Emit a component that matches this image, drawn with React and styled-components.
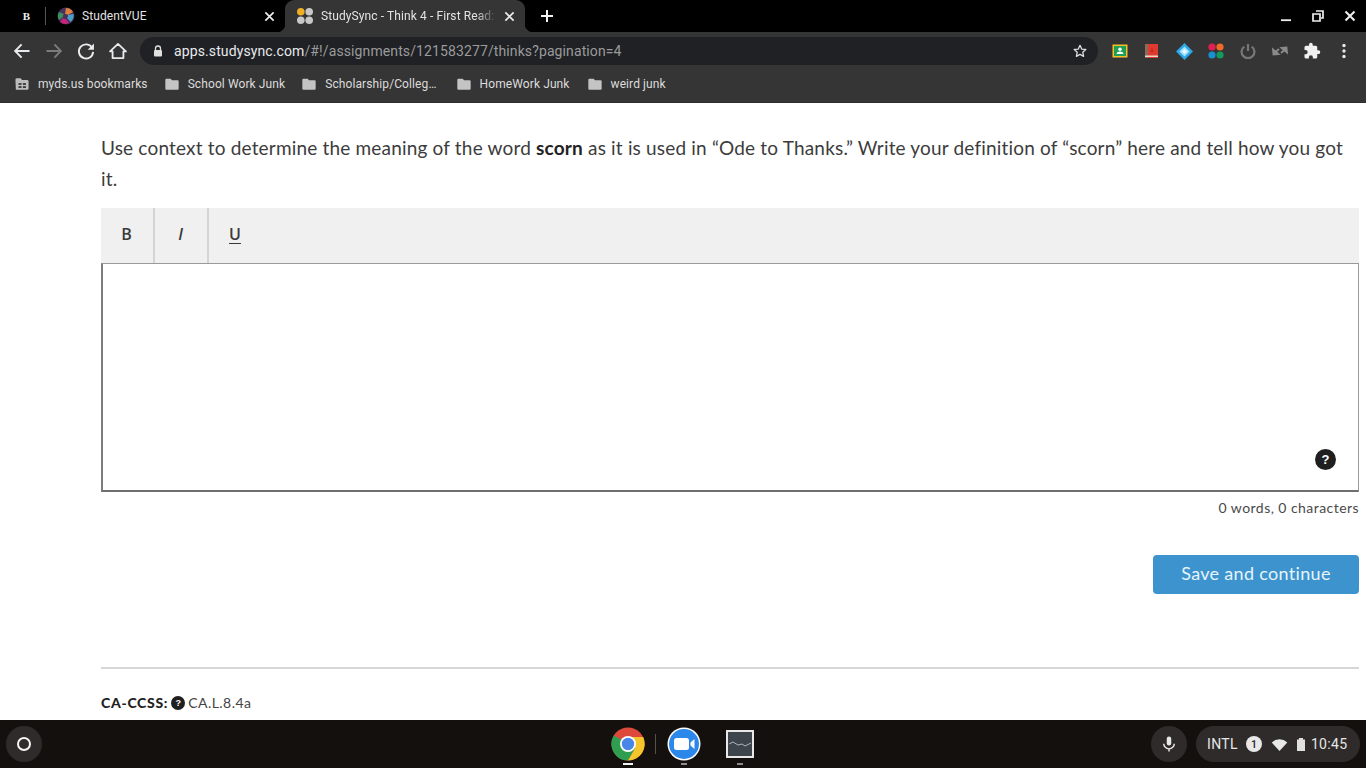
import React from "react";
import styled, { createGlobalStyle } from "styled-components";

const Global = createGlobalStyle`
  html, body { margin: 0; padding: 0; height: 100%; overflow: hidden; background: #fff; }
  #root { height: 100%; }
  *, *::before, *::after { box-sizing: border-box; }
`;

const Screen = styled.div`
  width: 1366px; height: 768px; display: flex; flex-direction: column; overflow: hidden;
  font-family: Roboto, "Liberation Sans", sans-serif;
`;

const TabStrip = styled.div`
  height: 32px; flex: none; background: #000; display: flex; align-items: stretch; color: #e8eaed;
`;
const PinnedTab = styled.div`
  width: 46px; display: flex; align-items: center; justify-content: center; position: relative;
  font: 700 11px "Liberation Serif", serif; color: #eee; padding-left: 7px;
  &::after { content: ""; position: absolute; right: 0; top: 7px; height: 18px; width: 1px; background: #555; }
`;
const Tab = styled.div`
  width: ${(p) => p.$w}px; display: flex; align-items: center;
  padding: 0 ${(p) => p.$pr}px 0 ${(p) => p.$pl}px; gap: 7px; font-size: 12px; position: relative;
  background: ${(p) => (p.$active ? "#353535" : "transparent")};
  border-radius: ${(p) => (p.$active ? "9px 9px 0 0" : "0")};
  ${(p) => p.$active && `
    &::before, &::after { content: ""; position: absolute; bottom: 0; width: 8px; height: 8px; }
    &::before { left: -8px; background: radial-gradient(circle at 0 0, transparent 8px, #353535 8.5px); }
    &::after { right: -8px; background: radial-gradient(circle at 100% 0, transparent 8px, #353535 8.5px); }
  `}
`;
const TabTitle = styled.span`
  flex: 1; white-space: nowrap; overflow: hidden; color: #e3e3e3; letter-spacing: 0.1px;
  ${(p) => p.$fade && "-webkit-mask-image: linear-gradient(90deg,#000 88%,transparent 100%); mask-image: linear-gradient(90deg,#000 88%,transparent 100%);"}
`;
const NewTab = styled.div`
  width: 44px; display: flex; align-items: center; justify-content: center;
`;
const WindowControls = styled.div`
  margin-left: auto; display: flex; align-items: center; height: 100%;
`;
const WinBtn = styled.div`
  width: 32px; height: 32px; display: flex; align-items: center; justify-content: center;
`;

const Toolbar = styled.div`
  height: 38px; flex: none; background: #353535; display: flex; align-items: center;
  padding: 0 6px;
`;
const NavBtn = styled.div`
  width: 32px; height: 32px; display: flex; align-items: center; justify-content: center; flex: none;
`;
const Omnibox = styled.div`
  flex: none; width: 958px; height: 28px; margin-left: 6px; border-radius: 14px; background: #202124;
  display: flex; align-items: center; padding: 0 10px 0 12px; font-size: 14px;
`;
const Url = styled.span`
  margin-left: 10px; flex: 1; color: #9a9b9c; white-space: nowrap; letter-spacing: 0.11px;
  b { font-weight: 400; color: #e8eaed; }
`;
const Extensions = styled.div`
  display: flex; align-items: center; margin-left: 6px;
`;
const ExtBtn = styled.div`
  width: 32px; height: 32px; display: flex; align-items: center; justify-content: center;
`;

const Bookmarks = styled.div`
  height: 33px; flex: none; background: #353535; display: flex; align-items: center; padding: 0 0 4px 15px;
  border-bottom: 1px solid #2e2e2e; font-size: 12px; color: #dcdcdc; letter-spacing: 0.1px;
`;
const Bookmark = styled.div`
  display: flex; align-items: center; gap: ${(p) => p.$gap || 8}px; margin-right: ${(p) => p.$mr}px; white-space: nowrap;
`;

const Page = styled.main`
  flex: 1; min-height: 0; overflow: hidden; background: #fff; padding: 29px 7px 0 101px;
  color: #3a3a3a;
`;
const Prompt = styled.p`
  margin: 0; font-family: Lato, sans-serif; font-size: 19px; line-height: 31px; color: #3c3c3c; letter-spacing: 0.18px;
  b { color: #222; font-weight: 700; }
`;
const EditorBar = styled.div`
  margin-top: 14px; height: 55px; background: #f0f0f0; display: flex;
`;
const FormatBtn = styled.div`
  width: ${(p) => p.$w}px; display: flex; align-items: center; justify-content: center; padding: 0 1px 3px 0;
  border-right: ${(p) => (p.$plain ? "none" : "2px solid #d4d4d4")};
  font: ${(p) => (p.$italic ? "italic 600" : "600")} 16px "Open Sans", sans-serif; color: #3a3a3a;
  text-decoration: ${(p) => (p.$under ? "underline" : "none")}; text-underline-offset: 3px;
`;
const EditorBox = styled.div`
  height: 229px; border-style: solid; border-width: 1px 1px 2px 2px; border-color: #9a9a9a #9a9a9a #6f6f6f #7d7d7d;
  position: relative; background: #fff;
`;
const HelpBadge = styled.span`
  position: absolute; right: 22px; bottom: 20px; width: 21px; height: 21px; border-radius: 50%;
  background: #1f1f1f; color: #fff; display: flex; align-items: center; justify-content: center;
  font: 700 13px "Liberation Sans", sans-serif;
`;
const Count = styled.div`
  text-align: right; margin-top: 7px; font: 400 14px/18px Lato, sans-serif; letter-spacing: 0.45px; color: #4a4a4a;
`;
const Actions = styled.div`
  display: flex; justify-content: flex-end; margin-top: 38px;
`;
const SaveButton = styled.button`
  width: 206px; height: 39px; border: 0; border-radius: 4px; background: #3c93cd; color: #e6f4fb;
  font: 400 18px Lato, sans-serif; letter-spacing: 0.32px; padding: 0 0 3px;
`;
const Rule = styled.hr`
  margin: 73px 0 0; border: 0; border-top: 2px solid #d6d6d6;
`;
const Standards = styled.div`
  margin-top: 25px; display: flex; align-items: center; gap: 3px; font: 400 14px/18px Lato, sans-serif; color: #444; letter-spacing: 0.45px;
  b { font-weight: 900; color: #222; margin-right: 0; letter-spacing: 0.7px; }
`;
const SmallHelp = styled.span`
  width: 14px; height: 14px; border-radius: 50%; background: #1f1f1f; color: #fff; display: inline-flex; letter-spacing: 0;
  align-items: center; justify-content: center; font: 700 9px "Liberation Sans", sans-serif;
`;

const Shelf = styled.footer`
  height: 48px; flex: none; background: #14100e; display: flex; align-items: center; position: relative; padding: 0 6px;
`;
const Launcher = styled.div`
  width: 36px; height: 36px; border-radius: 50%; background: #2e2b2a; display: flex; align-items: center; justify-content: center;
  &::after { content: ""; width: 14px; height: 14px; border-radius: 50%; border: 2px solid #f4f4f4; }
`;
const ShelfApps = styled.div`
  position: absolute; left: 611px; top: 0; height: 48px; display: flex; align-items: center;
`;
const AppSlot = styled.div`
  width: ${(p) => p.$w}px; height: 48px; position: relative; display: flex; align-items: center; justify-content: center;
  &::after { content: ""; position: absolute; bottom: 3px; left: 50%; transform: translateX(-50%);
    width: ${(p) => (p.$on ? 10 : 6)}px; height: 2px; background: ${(p) => (p.$on ? "#f2f2f2" : "#8c8c8c")}; }
`;
const Divider = styled.span`
  width: 1px; height: 20px; background: #55514f; margin: 0 11px 0 10px;
`;
const Tray = styled.div`
  margin-left: auto; display: flex; align-items: center; gap: 9px;
`;
const MicPill = styled.div`
  width: 36px; height: 36px; border-radius: 50%; background: #2e2b2a; display: flex; align-items: center; justify-content: center;
`;
const StatusPill = styled.div`
  height: 36px; width: 164px; border-radius: 18px; background: #2e2b2a; display: flex; align-items: center; padding-left: 11px;
  font-size: 14px; color: #e6e6e6; letter-spacing: 0.35px;
`;
const Notif = styled.span`
  width: 16px; height: 16px; border-radius: 50%; background: #e8e8e8; color: #222; font-size: 10.5px; font-weight: 500;
  display: inline-flex; align-items: center; justify-content: center; margin: 0 9px 0 8px; letter-spacing: 0;
`;
const TrayIcon = styled.span`
  display: inline-flex; margin-right: ${(p) => p.$mr}px;
`;

const Icon = ({ s = 16, vb = 24, children, ...r }) => (
  <svg width={s} height={s} viewBox={`0 0 ${vb} ${vb}`} fill="none" {...r}>{children}</svg>
);
const CloseI = ({ c = "#e8eaed", s = 12, w = 2.4 }) => (
  <Icon s={s} vb={12}><path d="M1.5 1.5l9 9M10.5 1.5l-9 9" stroke={c} strokeWidth={w * 0.8} /></Icon>
);
const Folder = () => (
  <Icon s={16}><path d="M2 5.5a1.5 1.5 0 011.5-1.5H10l2 2.5h8.5A1.5 1.5 0 0122 8v11a1.5 1.5 0 01-1.5 1.5h-17A1.5 1.5 0 012 19z" fill="#c4c4c4" /></Icon>
);

export default function App() {
  return (
    <Screen>
      <Global />
      <TabStrip>
        <PinnedTab>B</PinnedTab>
        <Tab $w={239} $pl={11} $pr={10}>
          <Icon s={18} vb={18}>
            <circle cx="9" cy="9" r="8.5" fill="#45305f" />
            <path d="M9 1a8 8 0 017 4L11 8a3 3 0 00-3-1z" fill="#e0803a" />
            <path d="M16.5 7a8 8 0 01-3 8L10 11a3 3 0 001-3z" fill="#4a9fc4" />
            <path d="M12 16a8 8 0 01-9-1l3-4a3 3 0 003 1z" fill="#c2257a" />
            <path d="M2 13a8 8 0 010-8l5 2a3 3 0 00-1 3z" fill="#3c8f5b" />
          </Icon>
          <TabTitle>StudentVUE</TabTitle>
          <CloseI s={11} />
        </Tab>
        <Tab $active $w={240} $pl={11} $pr={10}>
          <Icon s={18} vb={18}>
            <circle cx="4.8" cy="4.8" r="3.8" fill="#eeb022" />
            <circle cx="13.2" cy="4.8" r="3.8" fill="#c8c8c8" />
            <circle cx="4.8" cy="13.2" r="3.8" fill="#c8c8c8" />
            <circle cx="13.2" cy="13.2" r="3.8" fill="#c8c8c8" />
          </Icon>
          <TabTitle $fade>StudySync - Think 4 - First Read:</TabTitle>
          <CloseI s={11} />
        </Tab>
        <NewTab>
          <Icon s={14} vb={14}><path d="M7 1v12M1 7h12" stroke="#f1f1f1" strokeWidth="2" /></Icon>
        </NewTab>
        <WindowControls>
          <WinBtn><Icon s={12} vb={12}><path d="M1 10.2h10" stroke="#eee" strokeWidth="1.8" /></Icon></WinBtn>
          <WinBtn><Icon s={12} vb={12}><path d="M4 1h7v7H9M1 4h7v7H1z" stroke="#eee" strokeWidth="1.7" /></Icon></WinBtn>
          <WinBtn><CloseI s={12} c="#eee" w={2.6} /></WinBtn>
        </WindowControls>
      </TabStrip>

      <Toolbar>
        <NavBtn><Icon s={20}><path d="M21 12H4M11.5 4L3.8 12l7.7 8" stroke="#e8eaed" strokeWidth="2.3" /></Icon></NavBtn>
        <NavBtn><Icon s={20}><path d="M3 12h17M12.5 4l7.7 8-7.7 8" stroke="#7b7b7b" strokeWidth="2.3" /></Icon></NavBtn>
        <NavBtn><Icon s={20}><path d="M19.5 8.5A8.5 8.5 0 1020.5 13" stroke="#e8eaed" strokeWidth="2.3" /><path d="M21.5 3v7.5H14z" fill="#e8eaed" /></Icon></NavBtn>
        <NavBtn><Icon s={20}><path d="M12 3.5L2.5 12.5H5.5V20.5H18.5V12.5H21.5z" stroke="#e8eaed" strokeWidth="2.2" strokeLinejoin="round" /></Icon></NavBtn>
        <Omnibox>
          <Icon s={12} vb={12}><path d="M3.5 5V3.5a2.5 2.5 0 015 0V5" stroke="#e0e0e0" strokeWidth="1.3" /><rect x="2" y="5" width="8" height="6.5" rx="1" fill="#e0e0e0" /></Icon>
          <Url><b>apps.studysync.com</b>/#!/assignments/121583277/thinks?pagination=4</Url>
          <Icon s={16}><path d="M12 3.5l2.6 5.6 6.1.7-4.5 4.2 1.2 6-5.4-3-5.4 3 1.2-6-4.5-4.2 6.1-.7z" stroke="#dcdcdc" strokeWidth="2" strokeLinejoin="round" /></Icon>
        </Omnibox>
        <Extensions>
          <ExtBtn>
            <Icon s={16} vb={16}>
              <rect x="0.5" y="1.5" width="15" height="13" fill="#f6c026" />
              <rect x="2" y="3" width="12" height="10" fill="#1f9d55" />
              <circle cx="8" cy="6.3" r="1.7" fill="#fff" />
              <path d="M4.5 11c.4-2 2-2.6 3.5-2.6s3.1.6 3.5 2.6z" fill="#fff" />
            </Icon>
          </ExtBtn>
          <ExtBtn>
            <Icon s={16} vb={16}>
              <rect x="2" y="1" width="12" height="14" fill="#de3a2f" />
              <rect x="1" y="1" width="3" height="14" fill="#8a6a5a" />
              <rect x="1" y="12.5" width="13" height="1.5" fill="#e9d8c8" />
              <path d="M8 4l2 5H6z" fill="#c92a22" />
            </Icon>
          </ExtBtn>
          <ExtBtn>
            <Icon s={17} vb={16}>
              <path d="M8 0l8 8-8 8-8-8z" fill="#29a9e8" />
              <path d="M8 3.2L12.8 8 8 12.8 3.2 8z" fill="#a7e2f8" />
              <path d="M8 5.6L10.4 8 8 10.4 5.6 8z" fill="#e9f9ff" />
            </Icon>
          </ExtBtn>
          <ExtBtn>
            <Icon s={16} vb={16}>
              <circle cx="4" cy="4" r="3.6" fill="#e31e53" />
              <circle cx="12" cy="4" r="3.6" fill="#ef6a27" />
              <circle cx="4" cy="12" r="3.6" fill="#1a8fd1" />
              <circle cx="12" cy="12" r="3.6" fill="#129a5f" />
            </Icon>
          </ExtBtn>
          <ExtBtn>
            <Icon s={16} vb={16}>
              <path d="M4.3 3.6a6.4 6.4 0 107.4 0" stroke="#777" strokeWidth="2.2" />
              <path d="M8 1v7" stroke="#777" strokeWidth="2.2" />
            </Icon>
          </ExtBtn>
          <ExtBtn>
            <Icon s={16} vb={16}>
              <path d="M7 6L2.5 10M1 6.5l.5 5 5-.5zM9 10l4.5-4M15 9.5l-.5-5-5 .5z" stroke="#8a8a8a" strokeWidth="1.8" fill="#8a8a8a" />
            </Icon>
          </ExtBtn>
          <ExtBtn>
            <Icon s={18}><path d="M20.5 11H19V7a2 2 0 00-2-2h-4V3.5a2.5 2.5 0 00-5 0V5H4a2 2 0 00-2 2v3.8h1.5a2.7 2.7 0 010 5.4H2V20a2 2 0 002 2h3.8v-1.5a2.7 2.7 0 015.4 0V22H17a2 2 0 002-2v-4h1.5a2.5 2.5 0 000-5z" fill="#f1f1f1" /></Icon>
          </ExtBtn>
          <ExtBtn>
            <Icon s={16} vb={16}>
              <circle cx="8" cy="2.5" r="1.7" fill="#e8e8e8" />
              <circle cx="8" cy="8" r="1.7" fill="#e8e8e8" />
              <circle cx="8" cy="13.5" r="1.7" fill="#e8e8e8" />
            </Icon>
          </ExtBtn>
        </Extensions>
      </Toolbar>

      <Bookmarks>
        <Bookmark $mr={16} $gap={9}>
          <Icon s={14} vb={16}>
            <path d="M1 3.5A1.5 1.5 0 012.5 2H7l1.5 2h6A1.5 1.5 0 0116 5.5v8a1.5 1.5 0 01-1.5 1.5h-13z" fill="#bdbdbd" transform="translate(-0.5 -0.5)" />
            <rect x="4" y="7" width="3.5" height="2" fill="#353535" /><rect x="4" y="10.5" width="3.5" height="2" fill="#353535" /><rect x="9" y="7" width="3.5" height="2" fill="#353535" /><rect x="9" y="10.5" width="3.5" height="2" fill="#353535" />
          </Icon>
          myds.us bookmarks
        </Bookmark>
        <Bookmark $mr={16}><Folder />School Work Junk</Bookmark>
        <Bookmark $mr={19}><Folder />Scholarship/Colleg…</Bookmark>
        <Bookmark $mr={17}><Folder />HomeWork Junk</Bookmark>
        <Bookmark $mr={0}><Folder />weird junk</Bookmark>
      </Bookmarks>

      <Page>
        <Prompt>
          Use context to determine the meaning of the word <b>scorn</b> as it is used in “Ode to Thanks.” Write your definition of “scorn” here and tell how you got it.
        </Prompt>
        <EditorBar>
          <FormatBtn $w={54}>B</FormatBtn>
          <FormatBtn $w={54} $italic>I</FormatBtn>
          <FormatBtn $w={53} $under $plain>U</FormatBtn>
        </EditorBar>
        <EditorBox><HelpBadge>?</HelpBadge></EditorBox>
        <Count>0 words, 0 characters</Count>
        <Actions><SaveButton>Save and continue</SaveButton></Actions>
        <Rule />
        <Standards><b>CA-CCSS:</b><SmallHelp>?</SmallHelp>CA.L.8.4a</Standards>
      </Page>

      <Shelf>
        <Launcher />
        <ShelfApps>
          <AppSlot $w={34} $on>
            <Icon s={34} vb={34}>
              <circle cx="17" cy="17" r="16.5" fill="#dd4a3c" />
              <path d="M2.8 8.5A16.5 16.5 0 0017 33.5l8-13z" fill="#2f9e50" />
              <path d="M17 10h15.2A16.5 16.5 0 0117 33.5l7-12z" fill="#f6c52b" />
              <circle cx="17" cy="17" r="8" fill="#fff" />
              <circle cx="17" cy="17" r="6.2" fill="#4a86e8" />
            </Icon>
          </AppSlot>
          <Divider />
          <AppSlot $w={34}>
            <Icon s={34} vb={34}>
              <circle cx="17" cy="17" r="16.5" fill="#fff" />
              <circle cx="17" cy="17" r="15" fill="#2b87ea" />
              <rect x="7" y="11" width="15" height="12" rx="2.5" fill="#fff" />
              <path d="M23.5 15.5L27.5 12v10l-4-3.5z" fill="#fff" />
            </Icon>
          </AppSlot>
          <AppSlot $w={78}>
            <Icon s={28} vb={28}>
              <rect x="1" y="1" width="26" height="26" fill="#3e444c" stroke="#e8e8e8" strokeWidth="2" />
              <path d="M3 14l4-2 5 3 4-1 3 2 6-3" stroke="#a8b4c0" strokeWidth="1" />
            </Icon>
          </AppSlot>
        </ShelfApps>
        <Tray>
          <MicPill>
            <Icon s={18}><rect x="9" y="2" width="6" height="12" rx="3" fill="#e8e8e8" /><path d="M5 11.5a7 7 0 0014 0M12 18.5V22" stroke="#e8e8e8" strokeWidth="2" /></Icon>
          </MicPill>
          <StatusPill>
            INTL
            <Notif>1</Notif>
            <TrayIcon $mr={6}><Icon s={17}><path d="M1 9a16 16 0 0122 0L12 21z" fill="#e8e8e8" /></Icon></TrayIcon>
            <TrayIcon $mr={3}><Icon s={14} vb={14}><path d="M5 1h4v1.5h2V14H3V2.5h2z" fill="#e0e0e0" /></Icon></TrayIcon>
            10:45
          </StatusPill>
        </Tray>
      </Shelf>
    </Screen>
  );
}
